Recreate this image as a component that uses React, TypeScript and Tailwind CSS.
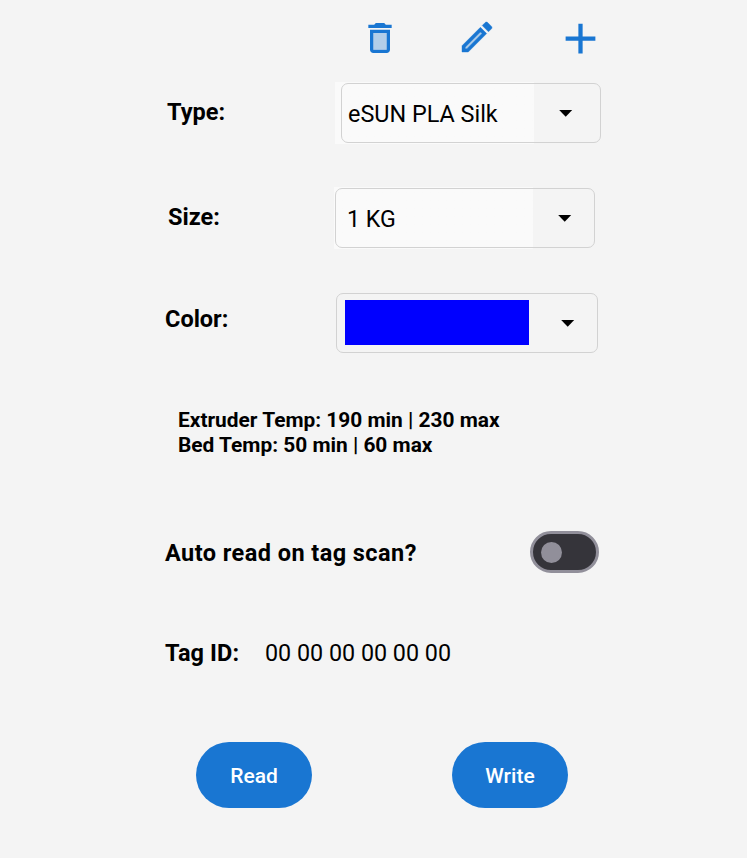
import type { ReactNode } from "react";

function TrashIcon() {
  return (
    <svg className="size-10" viewBox="0 0 24 24" fill="#1976d2">
      <path d="M8 9h8v10H8z" opacity=".3" />
      <path d="M15.5 4l-1-1h-5l-1 1H5v2h14V4zM6 19c0 1.1.9 2 2 2h8c1.1 0 2-.9 2-2V7H6v12zM8 9h8v10H8V9z" />
    </svg>
  );
}

function PencilIcon() {
  return (
    <svg className="size-10" viewBox="0 0 24 24" fill="#1976d2">
      <path d="M5 18.08V19h.92l9.06-9.06-.92-.92z" opacity=".3" />
      <path
        d="M20.71 7.04c.39-.39.39-1.02 0-1.41l-2.34-2.34c-.2-.2-.45-.29-.71-.29s-.51.1-.7.29l-1.83 1.83 3.75 3.75 1.83-1.83zM3 17.25V21h3.75L17.81 9.94l-3.75-3.75L3 17.25zM5.92 19H5v-.92l9.06-9.06.92.92L5.92 19z"
        stroke="#1976d2"
        strokeWidth=".25"
      />
    </svg>
  );
}

function PlusIcon() {
  return (
    <svg className="size-[51px]" viewBox="0 0 24 24" fill="#1976d2">
      <path d="M19 13h-6v6h-2v-6H5v-2h6V5h2v6h6v2z" />
    </svg>
  );
}

function Caret() {
  return (
    <svg className="h-[7px] w-[14px]" viewBox="0 0 14 7">
      <path d="M.2 0h13L6.7 6.8z" fill="#000" />
    </svg>
  );
}

function Label({ className, children }: { className: string; children: ReactNode }) {
  return <span className={`shrink-0 text-[23.5px] leading-7 font-bold ${className}`}>{children}</span>;
}

export default function App() {
  return (
    <main className="h-[858px] w-[747px] overflow-hidden bg-[#f4f4f4] font-[Roboto,sans-serif] whitespace-nowrap text-black">
      <header className="flex h-[82px] items-start pl-[360px]">
        <button className="mt-[18px]" aria-label="Delete"><TrashIcon /></button>
        <button className="mt-[17px] ml-[57px]" aria-label="Edit"><PencilIcon /></button>
        <button className="mt-[12.5px] ml-[57.5px]" aria-label="Add"><PlusIcon /></button>
      </header>

      <section className="flex h-[105px] items-start pl-[167px]">
        <Label className="mt-[16px] w-[168px]">Type:</Label>
        <div className="h-[62px] w-[267px] bg-linear-to-r from-[#fafafa] from-[199px] to-transparent to-[199px] py-px pl-[6px]">
          <div className="flex h-[60px] w-[260px] items-center rounded-[7px] border-[1.5px] border-[#d2d2d2] pl-[6px]">
            <span className="w-[211px] pt-[3px] text-[23.4px]">eSUN PLA Silk</span>
            <Caret />
          </div>
        </div>
      </section>

      <section className="flex h-[105px] items-start pl-[167px]">
        <Label className="mt-[16px] w-[167px] pl-px">Size:</Label>
        <div className="h-[62px] w-[262px] bg-linear-to-r from-[#fafafa] from-[199px] to-transparent to-[199px] py-px pl-px">
          <div className="flex h-[60px] w-[260px] items-center rounded-[7px] border-[1.5px] border-[#d2d2d2] pl-[11px]">
            <span className="w-[211px] pt-[3px] text-[23.2px]">1 KG</span>
            <Caret />
          </div>
        </div>
      </section>

      <section className="flex h-[116px] items-start pl-[165px]">
        <Label className="mt-[13px] w-[171px]">Color:</Label>
        <div className="mt-px flex h-[60px] w-[262px] items-center rounded-[7px] border-[1.5px] border-[#d2d2d2] pl-[8px]">
          <div className="mr-[32px] mb-px h-[45px] w-[184px] bg-[#0000ff]" />
          <Caret />
        </div>
      </section>

      <section className="h-[123px] pl-[178px] text-[20.9px] leading-[24.5px] font-bold">
        <p>Extruder Temp: 190 min | 230 max</p>
        <p>Bed Temp: 50 min | 60 max</p>
      </section>

      <section className="flex h-[107px] items-start pl-[165px]">
        <Label className="mt-[8px] w-[365px] tracking-[0.44px]">Auto read on tag scan?</Label>
        <button role="switch" aria-checked="false" aria-label="Auto read on tag scan" className="flex h-[42px] w-[69px] items-center rounded-full border-[3px] border-[#918f9a] bg-[#35343a] pl-[8px]">
          <span className="size-[21px] rounded-full bg-[#918f9a]" />
        </button>
      </section>

      <section className="flex h-[104px] items-start pl-[165px]">
        <Label className="mt-px w-[100px] tracking-[0.1px]">Tag ID:</Label>
        <span className="mt-px text-[23.3px] leading-7">00 00 00 00 00 00</span>
      </section>

      <footer className="flex gap-[140px] pl-[196px] text-[21px] font-medium text-white">
        <button className="h-[66px] w-[116px] rounded-full bg-[#1976d2] pt-[4px]">Read</button>
        <button className="h-[66px] w-[116px] rounded-full bg-[#1976d2] pt-[4px]">Write</button>
      </footer>
    </main>
  );
}
